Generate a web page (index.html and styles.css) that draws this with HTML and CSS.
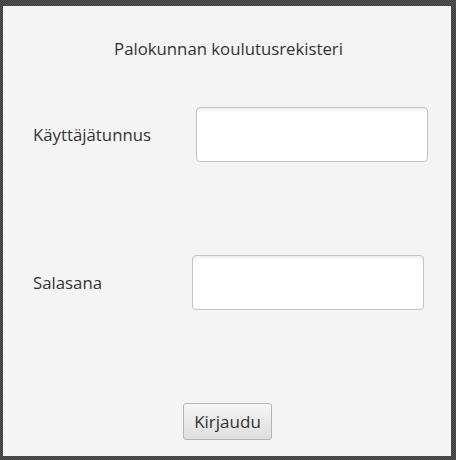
FILE: index.html
```html
<!DOCTYPE html>
<html lang="fi">
<head>
<meta charset="utf-8">
<title>Palokunnan koulutusrekisteri</title>
<link rel="stylesheet" href="styles.css">
</head>
<body>
<main class="panel">
  <h1 class="title">Palokunnan koulutusrekisteri</h1>
  <div class="row row-user">
    <label class="label label-user" for="user">Käyttäjätunnus</label>
    <input class="field" id="user" type="text">
  </div>
  <div class="row row-pass">
    <label class="label label-pass" for="pass">Salasana</label>
    <input class="field" id="pass" type="password">
  </div>
  <div class="actions">
    <button class="btn" type="button">Kirjaudu</button>
  </div>
</main>
</body>
</html>
```
FILE: styles.css
```css
html, body {
  margin: 0;
  padding: 0;
}
body {
  width: 456px;
  height: 460px;
  background-color: #474747;
  background-image: repeating-conic-gradient(#3d3d3d 0 25%, #545454 0 50%);
  background-size: 2px 2px;
  font-family: "Open Sans", "Noto Sans", sans-serif;
  color: #333333;
  overflow: hidden;
}
.panel {
  margin: 6px 0 0 3px;
  width: 448px;
  height: 450px;
  background: #f4f4f4;
  display: flex;
  flex-direction: column;
  box-sizing: border-box;
}
.title {
  margin: 33px 0 0 0;
  height: 20px;
  line-height: 20px;
  font-size: 16.75px;
  font-weight: normal;
  text-align: center;
  padding-left: 3px;
}
.row {
  display: flex;
  align-items: center;
  height: 55px;
}
.row-user { margin-top: 48px; }
.row-pass { margin-top: 93px; }
.label {
  box-sizing: border-box;
  padding-left: 30px;
  font-size: 16.8px;
  line-height: 20px;
}
.label-user { width: 193px; }
.label-pass { width: 189px; }
.field {
  box-sizing: border-box;
  width: 232px;
  height: 55px;
  margin: 0;
  border: 1px solid #c4c4c4;
  border-radius: 4px;
  background: #ffffff;
  box-shadow: inset 0 3px 3px -1px rgba(0, 0, 0, 0.07);
  outline: none;
}
.actions {
  margin-top: 93px;
  display: flex;
  justify-content: center;
}
.btn {
  box-sizing: border-box;
  width: 89px;
  height: 37px;
  margin-left: 1px;
  border: 1px solid #b4b4b4;
  border-radius: 3px;
  background: linear-gradient(#f6f6f6, #dedede);
  font-family: inherit;
  font-size: 17px;
  color: #333333;
  padding: 0;
}
```
